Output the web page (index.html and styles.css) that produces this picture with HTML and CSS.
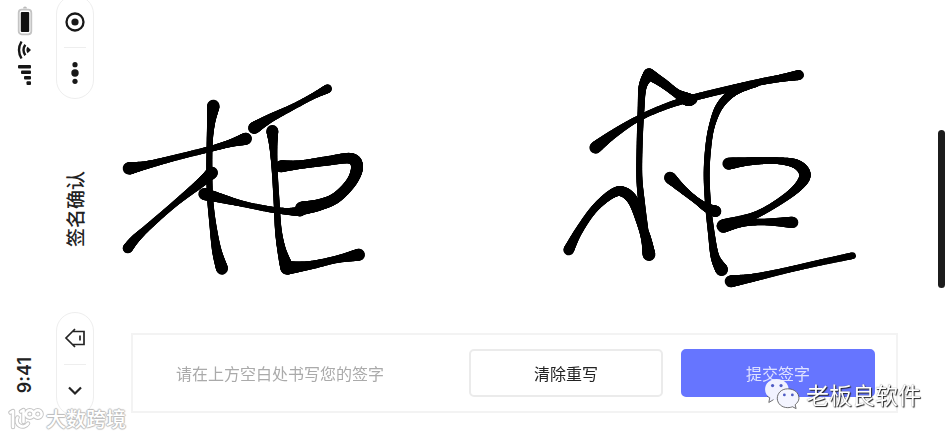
FILE: index.html
```html
<!DOCTYPE html>
<html lang="zh-CN">
<head>
<meta charset="utf-8">
<meta name="viewport" content="width=device-width, initial-scale=1">
<title>签名确认</title>
<link rel="stylesheet" href="styles.css">
</head>
<body>
<div class="screen">
  <aside class="status">
    <div class="status-icons">
      <svg width="16" height="30" viewBox="0 0 16 30" aria-hidden="true">
        <path d="M6 2.5a2 2 0 0 1 4 0z" fill="#bbb"/>
        <rect x="1.7" y="3.7" width="12.6" height="24.600" rx="3" fill="#fff" stroke="#c4c4c4" stroke-width="1.8"/>
        <rect x="3.800" y="6" width="8.400" height="20" rx="1" fill="#111"/>
      </svg>
      <svg width="16" height="20" viewBox="0 0 16 20" fill="none" stroke="#161616" stroke-width="2.400" aria-hidden="true">
        <path d="M4.500 1.500Q-.5 10 4.500 18.500M8.300 4.800Q4.700 10 8.300 15.200"/>
        <path d="M14 10L10.500 6.800Q8.300 10 10.500 13.200z" fill="#161616" stroke="none"/>
      </svg>
      <svg width="16" height="22" viewBox="0 0 16 22" fill="#161616" aria-hidden="true">
        <rect x="1" y="1" width="13" height="3.600" rx="1"/>
        <rect x="4" y="6.500" width="10" height="3.600" rx="1"/>
        <rect x="7" y="12" width="7" height="3.600" rx="1"/>
        <rect x="9.500" y="17.300" width="4.500" height="3.600" rx="1"/>
      </svg>
    </div>
    <time class="sideways clock">9:41</time>
  </aside>

  <header class="nav">
    <div class="capsule">
      <button class="capsule-button" aria-label="关闭">
        <svg width="22" height="22" viewBox="0 0 22 22" aria-hidden="true"><circle cx="11" cy="11" r="8.500" fill="none" stroke="#181818" stroke-width="2.300"/><circle cx="11" cy="11" r="3.600" fill="#181818"/></svg>
      </button>
      <button class="capsule-button" aria-label="更多">
        <svg width="22" height="22" viewBox="0 0 22 22" fill="#181818" aria-hidden="true"><circle cx="11" cy="2.700" r="2.600"/><circle cx="11" cy="11" r="3.700"/><circle cx="11" cy="19.300" r="2.600"/></svg>
      </button>
    </div>
    <h1 class="sideways title">签名确认</h1>
    <div class="capsule">
      <button class="capsule-button" aria-label="首页">
        <svg width="22" height="22" viewBox="0 0 22 22" fill="none" stroke="#242424" stroke-width="1.700" aria-hidden="true"><path d="M11 2L2 11l9 9M8.500 4.500H20v13H8.500"/><path d="M16 8.500v5"/></svg>
      </button>
      <button class="capsule-button" aria-label="返回">
        <svg width="22" height="22" viewBox="0 0 22 22" fill="none" stroke="#242424" stroke-width="2.200" aria-hidden="true"><path d="M5 8.500l6 6 6-6"/></svg>
      </button>
    </div>
  </header>

  <main class="content">
    <canvas class="pad" id="pad" width="832" height="318" aria-label="签名区域"></canvas>
    <section class="panel">
      <p class="hint">请在上方空白处书写您的签字</p>
      <button class="button">清除重写</button>
      <button class="button button-primary">提交签字</button>
    </section>
  </main>

  <div class="home"><div class="home-bar"></div></div>

  <div class="mark mark-left">
    <svg width="36" height="24" viewBox="0 0 36 24" fill="none" stroke-linecap="round" stroke-linejoin="round" aria-hidden="true">
      <path stroke="#c4c4c4" stroke-width="4.400" d="M2.500 5.500L5 4v16M9.500 10.500a6 6 0 1 0 10.500 6M13 4.500L15.500 3v12M18 7a3.800 3.800 0 1 0 7.600 0a3.800 3.800 0 1 0-7.600 0M26 7a3.800 3.800 0 1 0 7.600 0a3.800 3.800 0 1 0-7.600 0"/>
      <path stroke="#fff" stroke-width="2.600" d="M2.500 5.500L5 4v16M9.500 10.500a6 6 0 1 0 10.500 6M13 4.500L15.500 3v12M18 7a3.800 3.800 0 1 0 7.600 0a3.800 3.800 0 1 0-7.600 0M26 7a3.800 3.800 0 1 0 7.600 0a3.800 3.800 0 1 0-7.600 0"/>
    </svg>
    <span>大数跨境</span>
  </div>
  <div class="mark mark-right">
    <svg width="36" height="32" viewBox="0 0 38 34" aria-hidden="true">
      <path d="M13 1C6 1 1 6 1 12c0 4 2 7 5 9l-1 5 5-3c1 .4 3 .6 5 .5C23 23 26 18 26 12 26 5 20 1 13 1z" fill="#f1f2ff"/>
      <path d="M3 19c1 1 2 1.500 3 2l-1 5 5-3" fill="none" stroke="#444" stroke-width=".8"/>
      <path d="M25 11.500c-7 0-11 5-11 10 0 6 5 10 11 10 2 0 4-.4 5-1l4 2-1-4c2-2 4-4 4-7 0-6-5-10-12-10z" fill="#f4f5ff" stroke="#555" stroke-width=".9"/>
      <g fill="#4f5cc4"><circle cx="9" cy="8" r="1.700"/><circle cx="18" cy="8" r="1.700"/><circle cx="21.500" cy="18" r="1.500"/><circle cx="30" cy="18" r="1.500"/></g>
    </svg>
    <span>老板良软件</span>
  </div>
</div>
<script src="pad.js"></script>
</body>
</html>
```
FILE: styles.css
```css
* { box-sizing: border-box; }

body {
  margin: 0;
  background: #fff;
  color: #222;
  font-family: "Noto Sans CJK SC", sans-serif;
  font-size: 16px;
}

button { font: inherit; color: inherit; cursor: pointer; }

.screen {
  position: relative;
  display: grid;
  grid-template-columns: 50px 50px minmax(0, 1fr) 20px;
  min-height: 100vh;
  overflow: hidden;
}

.sideways {
  writing-mode: vertical-rl;
  text-orientation: sideways;
  transform: rotate(180deg);
}

.status {
  display: flex;
  flex-direction: column;
  align-items: center;
  justify-content: space-between;
  padding: 6px 0 44px;
}

.status-icons {
  display: flex;
  flex-direction: column;
  gap: 4px;
}

.clock {
  font-family: Inter, sans-serif;
  font-size: 18px;
  line-height: 24px;
  font-weight: 600;
}

.nav {
  display: flex;
  flex-direction: column;
  align-items: center;
  justify-content: space-between;
  margin-top: -5px;
  padding-bottom: 21px;
}

.capsule {
  display: flex;
  flex-direction: column;
  width: 38px;
  height: 104px;
  border: 1px solid #eee;
  border-radius: 19px;
}

.capsule-button {
  flex: 1;
  display: grid;
  place-items: center;
  padding: 0;
  border: 0;
  background: none;
}

.capsule-button + .capsule-button::before {
  content: "";
  width: 22px;
  height: 1px;
  background: #eee;
}

.capsule-button + .capsule-button {
  grid-template-rows: 1px 1fr;
}

.title {
  margin: 8px 0 0;
  font-size: 19px;
  line-height: 24px;
  font-weight: 500;
}

.content {
  display: flex;
  flex-direction: column;
  justify-content: space-between;
  padding-bottom: 24px;
}

.pad {
  display: block;
  width: 100%;
  touch-action: none;
}

.panel {
  display: flex;
  align-items: center;
  gap: 18px;
  margin: 0 34px 0 31px;
  padding: 14px 21px 14px 43px;
  border: 2px solid #f3f3f3;
}

.hint {
  flex: 1;
  margin: 0;
  color: #aaa;
}

.button {
  flex: 0 1 194px;
  height: 48px;
  border: 2px solid #ebebeb;
  border-radius: 5px;
  background: #fff;
}

.button-primary {
  border-color: #6675ff;
  background: #6675ff;
  color: #dfe2ff;
}

.home {
  display: flex;
  flex-direction: column;
  justify-content: center;
  padding-left: 6px;
  padding-bottom: 20px;
}

.home-bar {
  width: 7px;
  height: 158px;
  border-radius: 4px;
  background: #1c1c1c;
}

.mark {
  position: absolute;
  display: flex;
  align-items: center;
  color: #fff;
  pointer-events: none;
}

.mark-left {
  left: 8px;
  bottom: 4px;
  gap: 2px;
  font-size: 20px;
  line-height: 28px;
  font-weight: 500;
  text-shadow: 1px 0 1px #bbb, -1px 0 1px #bbb, 0 1px 1px #bbb, 0 -1px 1px #bbb;
}

.mark-right {
  right: 31px;
  bottom: 26px;
  gap: 6px;
  font-size: 23px;
  line-height: 34px;
  text-shadow: 1px 1px 1px #222, 0 0 1px #666;
}
```
FILE: pad.js
```js
// Each stroke is a list of [x, y, pen radius] samples in the drawing's own units.
const drawings = [
  {
    x: 10, y: 70,
    strokes: [
      [[310,108,19],[303,160,12],[299,220,9],[298,300,9],[300,380,9],[308,460,10],[320,540,14],[336,596,18]],
      [[57,295,19],[110,285,12],[200,262,9],[300,237,9],[360,220,11],[408,206,18]],
      [[306,308,18],[270,340,14],[190,405,9],[110,475,10],[75,508,13],[53,535,15]],
      [[283,372,18],[330,384,14],[400,402,9],[480,418,9],[530,424,10],[572,425,14]],
      [[432,174,18],[480,145,13],[550,110,9],[610,78,9],[653,56,13]],
      [[487,183,18],[490,230,12],[494,300,9],[500,400,9],[505,480,10],[515,540,13],[531,594,20]],
      [[531,594,20],[600,586,13],[680,568,11],[747,554,18]],
      [[512,289,18],[570,284,13],[650,273,14],[722,265,16],[741,290,18],[725,335,16],[680,382,16],[630,404,17],[575,415,20]]
    ]
  },
  {
    x: 450, y: 50,
    strokes: [
      [[136,293,18],[190,252,13],[260,208,9],[340,172,9],[420,146,10],[520,121,10],[620,98,10],[690,85,11],[747,75,15]],
      [[56,600,16],[85,545,12],[130,480,11],[180,435,13],[215,424,15],[248,450,16],[270,510,13],[288,565,15],[297,614,19]],
      [[285,540,10],[275,460,10],[268,380,9],[269,280,9],[273,180,10],[278,110,12],[297,72,17]],
      [[297,72,17],[340,100,14],[380,130,13],[412,148,19],[428,148,14]],
      [[620,100,10],[570,116,12],[535,138,12],[505,175,11],[485,230,9],[475,290,9],[470,370,9],[474,460,9],[484,550,10],[495,620,13],[515,659,19]],
      [[360,383,18],[400,420,12],[440,452,10],[470,473,13],[497,484,17]],
      [[535,341,18],[600,334,12],[680,332,10],[740,343,14],[765,375,17],[740,415,13],[680,460,10],[610,498,11],[520,528,20]],
      [[520,528,20],[580,518,12],[650,516,10],[728,517,17]],
      [[542,694,18],[610,683,12],[700,663,9],[800,640,9],[908,617,10]]
    ]
  }
];

const ctx = document.getElementById("pad").getContext("2d");

// Catmull-Rom value between b and c
function between(a, b, c, d, t) {
  return 0.5 * (2 * b + (c - a) * t + (2 * a - 5 * b + 4 * c - d) * t * t + (3 * b - a - 3 * c + d) * t * t * t);
}

for (const drawing of drawings) {
  ctx.save();
  ctx.translate(drawing.x, drawing.y);
  ctx.scale(1 / 3, 1 / 3);
  ctx.lineCap = "round";
  for (const points of drawing.strokes) {
    for (let i = 0; i < points.length - 1; i++) {
      const a = points[Math.max(i - 1, 0)];
      const b = points[i];
      const c = points[i + 1];
      const d = points[Math.min(i + 2, points.length - 1)];
      let last = b;
      for (let s = 1; s <= 24; s++) {
        const next = [0, 1, 2].map(k => between(a[k], b[k], c[k], d[k], s / 24));
        ctx.lineWidth = next[2] * 2;
        ctx.beginPath();
        ctx.moveTo(last[0], last[1]);
        ctx.lineTo(next[0], next[1]);
        ctx.stroke();
        last = next;
      }
    }
  }
  ctx.restore();
}
```
